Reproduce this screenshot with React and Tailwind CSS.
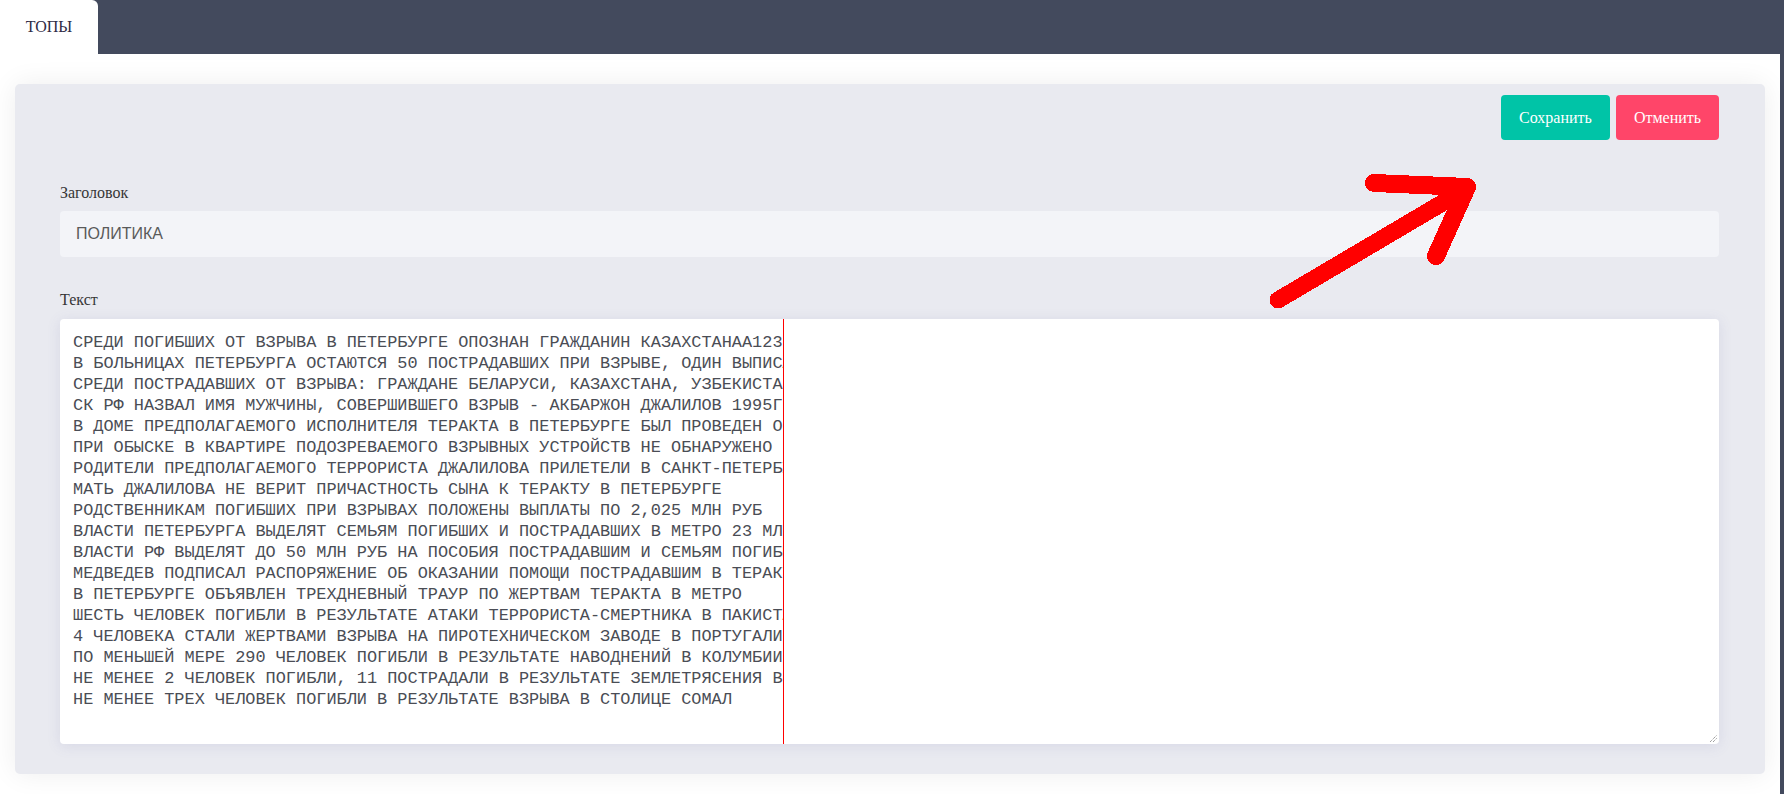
import React from "react";

const lines = [
  "СРЕДИ ПОГИБШИХ ОТ ВЗРЫВА В ПЕТЕРБУРГЕ ОПОЗНАН ГРАЖДАНИН КАЗАХСТАНАА123",
  "В БОЛЬНИЦАХ ПЕТЕРБУРГА ОСТАЮТСЯ 50 ПОСТРАДАВШИХ ПРИ ВЗРЫВЕ, ОДИН ВЫПИСАН",
  "СРЕДИ ПОСТРАДАВШИХ ОТ ВЗРЫВА: ГРАЖДАНЕ БЕЛАРУСИ, КАЗАХСТАНА, УЗБЕКИСТАНА",
  "СК РФ НАЗВАЛ ИМЯ МУЖЧИНЫ, СОВЕРШИВШЕГО ВЗРЫВ - АКБАРЖОН ДЖАЛИЛОВ 1995Г",
  "В ДОМЕ ПРЕДПОЛАГАЕМОГО ИСПОЛНИТЕЛЯ ТЕРАКТА В ПЕТЕРБУРГЕ БЫЛ ПРОВЕДЕН ОБЫСК",
  "ПРИ ОБЫСКЕ В КВАРТИРЕ ПОДОЗРЕВАЕМОГО ВЗРЫВНЫХ УСТРОЙСТВ НЕ ОБНАРУЖЕНО",
  "РОДИТЕЛИ ПРЕДПОЛАГАЕМОГО ТЕРРОРИСТА ДЖАЛИЛОВА ПРИЛЕТЕЛИ В САНКТ-ПЕТЕРБУРГ",
  "МАТЬ ДЖАЛИЛОВА НЕ ВЕРИТ ПРИЧАСТНОСТЬ СЫНА К ТЕРАКТУ В ПЕТЕРБУРГЕ",
  "РОДСТВЕННИКАМ ПОГИБШИХ ПРИ ВЗРЫВАХ ПОЛОЖЕНЫ ВЫПЛАТЫ ПО 2,025 МЛН РУБ",
  "ВЛАСТИ ПЕТЕРБУРГА ВЫДЕЛЯТ СЕМЬЯМ ПОГИБШИХ И ПОСТРАДАВШИХ В МЕТРО 23 МЛН РУБ",
  "ВЛАСТИ РФ ВЫДЕЛЯТ ДО 50 МЛН РУБ НА ПОСОБИЯ ПОСТРАДАВШИМ И СЕМЬЯМ ПОГИБШИХ",
  "МЕДВЕДЕВ ПОДПИСАЛ РАСПОРЯЖЕНИЕ ОБ ОКАЗАНИИ ПОМОЩИ ПОСТРАДАВШИМ В ТЕРАКТЕ",
  "В ПЕТЕРБУРГЕ ОБЪЯВЛЕН ТРЕХДНЕВНЫЙ ТРАУР ПО ЖЕРТВАМ ТЕРАКТА В МЕТРО",
  "ШЕСТЬ ЧЕЛОВЕК ПОГИБЛИ В РЕЗУЛЬТАТЕ АТАКИ ТЕРРОРИСТА-СМЕРТНИКА В ПАКИСТАНЕ",
  "4 ЧЕЛОВЕКА СТАЛИ ЖЕРТВАМИ ВЗРЫВА НА ПИРОТЕХНИЧЕСКОМ ЗАВОДЕ В ПОРТУГАЛИИ",
  "ПО МЕНЬШЕЙ МЕРЕ 290 ЧЕЛОВЕК ПОГИБЛИ В РЕЗУЛЬТАТЕ НАВОДНЕНИЙ В КОЛУМБИИ",
  "НЕ МЕНЕЕ 2 ЧЕЛОВЕК ПОГИБЛИ, 11 ПОСТРАДАЛИ В РЕЗУЛЬТАТЕ ЗЕМЛЕТРЯСЕНИЯ В ИТАЛИИ",
  "НЕ МЕНЕЕ ТРЕХ ЧЕЛОВЕК ПОГИБЛИ В РЕЗУЛЬТАТЕ ВЗРЫВА В СТОЛИЦЕ СОМАЛ",
];

const serif = { fontFamily: '"Liberation Serif", "Times New Roman", serif' };

export default function App() {
  return (
    <div className="relative w-[1784px] h-[794px] overflow-hidden bg-[#434a5d]">
      {/* top bar */}
      <div className="flex h-[54px]">
        <div
          className="w-[98px] h-[54px] bg-white rounded-tr-[6px] flex items-center justify-center text-[16px] text-[#2f2b45]"
          style={serif}
        >
          ТОПЫ
        </div>
      </div>

      {/* content */}
      <div className="w-[1780px] h-[740px] bg-white pt-[30px] px-[15px]">
        <div className="h-[690px] rounded-[5px] bg-[#e9eaf0] shadow-[0_0_28px_rgba(0,0,0,0.07)] pl-[45px] pr-[46px] pt-[11px]">
          <div className="flex justify-end gap-[6px]">
            <button
              className="w-[109px] h-[45px] rounded-[4px] bg-[#00c4a7] text-white text-[16px]"
              style={serif}
            >
              Сохранить
            </button>
            <button
              className="w-[103px] h-[45px] rounded-[4px] bg-[#ff4569] text-white text-[16px]"
              style={serif}
            >
              Отменить
            </button>
          </div>

          <div
            className="mt-[41px] h-[24px] leading-[24px] text-[16px] text-[#363636]"
            style={serif}
          >
            Заголовок
          </div>
          <div
            className="mt-[6px] h-[46px] rounded-[4px] bg-[#f3f4f8] flex items-center pl-[16px] text-[16px] text-[#5a5a5a]"
            style={{ fontFamily: '"Liberation Sans", Arial, sans-serif' }}
          >
            ПОЛИТИКА
          </div>

          <div
            className="mt-[31px] h-[24px] leading-[24px] text-[16px] text-[#363636]"
            style={serif}
          >
            Текст
          </div>
          <div className="relative mt-[7px] h-[425px] rounded-[4px] bg-white shadow-[0_2px_14px_rgba(90,95,160,0.13)]">
            <div
              className="w-[724px] h-[425px] overflow-hidden border-r border-[#ff0000] pl-[13px] pt-[13px] whitespace-pre text-[16.9px] leading-[21px] text-[#4a4d55]"
              style={{ fontFamily: '"Liberation Mono", "Courier New", monospace' }}
            >
              {lines.map((l, i) => (
                <div key={i}>{l}</div>
              ))}
            </div>
            <svg
              className="absolute right-[1px] bottom-[1px]"
              width="9"
              height="9"
              viewBox="0 0 9 9"
            >
              <line x1="1" y1="8" x2="8" y2="1" stroke="#777" strokeWidth="1" strokeDasharray="1 1" />
              <line x1="4" y1="8" x2="8" y2="4" stroke="#777" strokeWidth="1" strokeDasharray="1 1" />
            </svg>
          </div>
        </div>
      </div>

      {/* hand-drawn arrow annotation */}
      <svg
        className="absolute left-0 top-0 pointer-events-none"
        width="1784"
        height="794"
        viewBox="0 0 1784 794"
        shapeRendering="crispEdges"
      >
        <g fill="none" stroke="#ff0000" strokeLinecap="round" strokeLinejoin="round">
          <line x1="1278" y1="300" x2="1466" y2="189" strokeWidth="17" />
          <polyline points="1374,183 1467,187 1436,256" strokeWidth="18" />
        </g>
      </svg>
    </div>
  );
}
